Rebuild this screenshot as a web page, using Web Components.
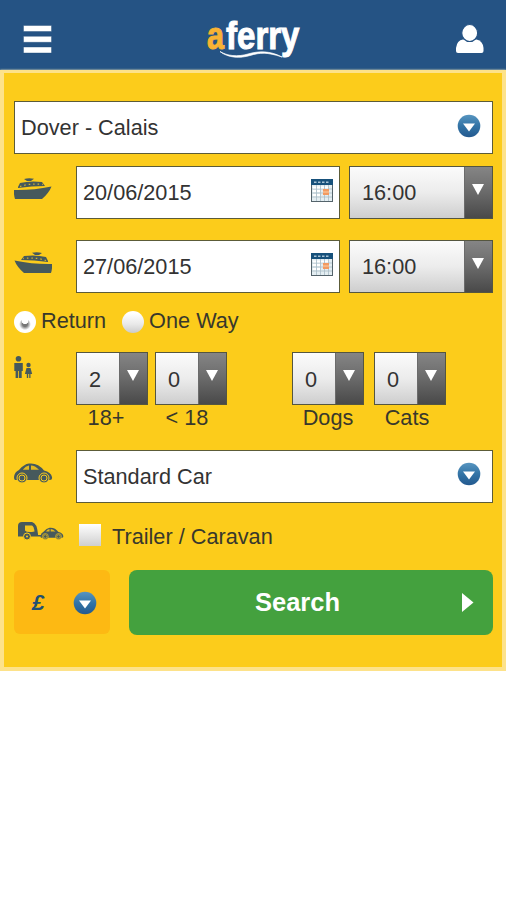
<!DOCTYPE html>
<html lang="en"><head><meta charset="utf-8"><title>aferry</title>
<style>
body{margin:0;background:#fff;font-family:"Liberation Sans",Arial,sans-serif;font-size:21.700px;line-height:26px;color:#38382c}
</style></head><body>
<af-app></af-app>
<script>
const define=(name,html)=>{
  const t=document.createElement('template');
  t.innerHTML='<style>*{box-sizing:border-box}svg{display:block;flex:none}</style>'+html;
  customElements.define(name,class extends HTMLElement{
    constructor(){super();this.attachShadow({mode:'open'}).append(t.content.cloneNode(true));}
  });
};
define('af-header',`<style>
:host{display:flex;justify-content:space-between;align-items:flex-start;height:70px;box-sizing:border-box;padding:0 22px 0 23px;background:#255384}
</style>
<svg width="29" height="70"><path d="M.5 25.500H28.500v6H.5zM.5 36.300h28v6H.5zM.5 47h28v6H.5z" fill="#fff" stroke="#1b4674" stroke-width=".4"/></svg>
<svg width="110" height="70" style="margin-left:4px" font-family="Liberation Sans" font-weight="bold" stroke-width="1"><text x="6" y="49" font-size="38" textLength="17" lengthAdjust="spacingAndGlyphs" fill="#f8b334" stroke="#f8b334">a</text><text x="25" y="49" font-size="38" textLength="73.500" lengthAdjust="spacingAndGlyphs" fill="#fff" stroke="#fff">ferry</text>
<path d="M19 51.500C27 58 39 58.500 49 55.500S66 52 81 57C69 50.500 57 51 47 54S26 56 19 51.500Z" fill="#fff" stroke="#fff" stroke-width=".7"/></svg>
<svg width="28" height="70"><path d="M0 51V48Q1 40 7 39.500H20.500Q27 41 27.500 48V51Q27.500 53 25.500 53H2Q0 53 0 51Z" fill="#fff"/><ellipse cx="13.700" cy="33" rx="8" ry="8.500" fill="#fff" stroke="#255384" stroke-width="1.200"/></svg>`);
define('af-panel',`<style>:host{display:block;box-sizing:border-box;height:601px;padding:28px 9.500px 0 10px;background:#fccc1b;border:4px solid #fde28a;border-top-width:3px;box-shadow:0 0 2px #fff3c0}</style><slot></slot>`);
define('af-row',`<style>:host{display:flex;align-items:center}
.i{width:62px;flex:none}.c{flex:1;display:flex;gap:9px;min-width:0}</style><div class="i"><slot name="icon"></slot></div><div class="c"><slot></slot></div>`);
define('af-field',`<style>:host{display:flex;flex:1;box-sizing:border-box;height:53px;align-items:center;justify-content:space-between;background:#fff;border:1.500px solid #5c5c38;padding:0 11px 0 6px;color:#333}</style><span><slot></slot></span><slot name="end"></slot>`);
define('af-dot',`<style>:host{display:block;margin-top:var(--dy,-4px)}</style><svg width="24" height="24"><defs><linearGradient id="g" x2="0" y2="1"><stop stop-color="#5795c0"/><stop offset=".5" stop-color="#3374a6"/><stop offset="1" stop-color="#23598f"/></linearGradient></defs><circle cx="12" cy="12" r="11.300" fill="url(#g)"/><path d="M6 9.500h12l-6 8z" fill="#fff"/></svg>`);
define('af-calendar',`<style>:host{display:block;margin:-4px -5px 0 0}</style><svg width="22" height="23"><rect x=".5" y=".5" width="21" height="22" fill="#e4eef2" stroke="#54636b"/><path d="M5.500 6V22M9.500 6V22M13.500 6V22M17.500 6V22M1 10h20M1 14h20M1 18h20" stroke="#a9bdc7" stroke-width=".8"/><path d="M2 7.500h3v2H2zM6 7.500h3v2H6zM10 7.500h3v2h-3zM14 7.500h3v2h-3zM6 11h3v2H6zM2 11h3v2H2zM2 15h3v2H2zM6 15h3v2H6z" fill="#fff"/><path d="M0 0h22v6H0z" fill="#17517b"/><path d="M3 3.200h16" stroke="#a8c3d6" stroke-width="1.500" stroke-dasharray="2.500 1.500"/><rect x="12" y="10" width="6" height="6" fill="#f29a61"/><path d="M12 13h6" stroke="#f9cfa9"/></svg>`);
define('af-select',`<style>:host{display:flex;box-sizing:border-box;width:var(--w,72px);height:53px;border:1.500px solid #55563f;background:linear-gradient(#fbfbfb,#ececec 50%,#cecece);color:#333;flex:none}
.v{flex:1;padding:var(--p,14px 0 0 12px)}.a{width:28px;border-left:1px solid #6b6b6b;background:linear-gradient(#858585,#6a6a6a 50%,#494949);display:flex;justify-content:center;padding:17px 2px 0 0}</style><div class="v"><slot></slot></div><div class="a"><svg width="14" height="12"><path d="M1 0h12L7 11z" fill="#fff"/></svg></div>`);
define('af-count',`<style>:host{display:block;width:72px;flex:none}.l{text-align:center;line-height:26px;white-space:nowrap;padding-right:var(--pr,10px)}</style><slot></slot><div class="l"><slot name="label"></slot></div>`);
define('af-radio',`<style>:host{display:flex;align-items:center;gap:5px}
i{width:22px;height:22px;border-radius:50%;background:linear-gradient(#fff 10%,#e9e9e9 60%,#cbcbcb);flex:none;margin-top:2px}
:host([checked]) i{background:radial-gradient(circle at 50% 45%,#fff 18%,transparent 20%),radial-gradient(circle at 50% 60%,#777 0 14%,#bbb 24%,#fff 34%)}</style><i></i><slot></slot>`);
define('af-check',`<style>:host{display:flex;align-items:center;gap:11px}i{width:22px;height:22px;background:linear-gradient(#fff,#cfcfcf);margin:-4px 0 0 3px}</style><i></i><slot></slot>`);
define('af-currency',`<style>:host{display:flex;justify-content:space-between;align-items:center;box-sizing:border-box;width:96px;height:64px;border-radius:6px;background:#fdb913;padding:2px 13px 0 18px;color:#204f72;font-weight:bold;font-style:italic;--dy:0}</style><slot></slot><af-dot></af-dot>`);
define('af-button',`<style>:host{display:flex;flex:1;align-items:center;box-sizing:border-box;height:65px;border-radius:8px;background:#44a13e;color:#fff;font-weight:bold;font-size:25.500px;padding-right:19px}
b{flex:1;text-align:center;padding:0 0 2px 5px}</style><b><slot></slot></b><svg width="12" height="19"><path d="M0 0L11.500 9.500L0 19z" fill="#fff"/></svg>`);
define('af-ship',`<style>:host{display:block}:host([flip]){transform:scaleX(-1);width:38px}</style><svg width="38" height="23"><g fill="#46595c"><path d="M0 12Q18 12.500 37.500 8.500Q35 15 28 21H1Q-.5 16 0 12Z"/><path d="M4 9L6 5Q16 2.500 28 4L31 8Q18 8 4 10Z"/><path d="M10 1Q15-.5 20 .8L17 3H13Z"/></g><path d="M6 8.500Q16 5 29 6.500" stroke="#d4b42b" stroke-width="1.300" stroke-dasharray="1.500 3" fill="none"/></svg>`);
define('af-people',`<style>:host{display:block}</style><svg width="19" height="23" fill="#46595c"><circle cx="4.500" cy="2.800" r="2.800"/><path d="M.3 7h8.500v8H7.700v7H5v-7H4.200v7H1.600v-7H.3z"/><circle cx="14.500" cy="9" r="2.200"/><path d="M12.500 12h4l1.700 6h-1.700v4h-1.300v-4h-1v4h-1.400v-4h-1.900z"/></svg>`);
const car=`<path d="M0 14Q.5 9 5 7Q10 1 15 .5Q24-.5 30 7.500Q37 9 38 14Q38.500 17 36 17H1Q0 17 0 14Z" fill="#46595c"/><path d="M9 6.500Q11.500 3 15 2.500V6.800H9ZM17 2.500Q21 2.500 25 6.800H17Z" fill="#e0b823"/><g fill="#46595c" stroke="#fccc1b" stroke-width="1"><circle cx="8" cy="15" r="5"/><circle cx="30" cy="15" r="5"/></g><g fill="none" stroke="#fccc1b"><circle cx="8" cy="15" r="3"/><circle cx="30" cy="15" r="3"/></g>`;
define('af-car',`<style>:host{display:block}</style><svg width="40" height="21">${car}</svg>`);
define('af-caravan',`<style>:host{display:block;margin-left:4px}</style><svg width="46" height="19"><path d="M0 16V4Q0 0 4 0H14Q19 1 20 12V13h3v1.500H0Z" fill="#46595c"/><path d="M7 3.500h7q2 1 2.500 6Q9 11 7 8.500Z" fill="#f2c51e"/><circle cx="9" cy="14.500" r="3.500" fill="#46595c" stroke="#fccc1b"/><circle cx="9" cy="14.500" r="1" fill="#fccc1b"/><g transform="translate(22.500 5.500) scale(.6)">${car}</g></svg>`);
define('af-app',`<style>
:host{display:block}.opts{display:flex;gap:16px;height:26px;margin-top:15px}
.date{width:264px;display:flex;flex:none}
.counts{display:grid;grid-template-columns:72px 72px 72px 72px;column-gap:7px;}
.counts>:nth-child(3){margin-left:58px}.counts>:nth-child(4){margin-left:61px}
.buttons{display:flex;gap:18.500px;margin-top:20px}
</style><af-header></af-header><af-panel>
<af-field>Dover - Calais<af-dot slot="end"></af-dot></af-field>
<af-row style="margin-top:12px"><af-ship slot="icon" style="margin-top:-7px"></af-ship><div class="date"><af-field>20/06/2015<af-calendar slot="end"></af-calendar></af-field></div><af-select style="--w:144px;--p:13px 0 0 12px">16:00</af-select></af-row>
<af-row style="margin-top:21px"><af-ship flip slot="icon" style="margin-top:-7px"></af-ship><div class="date"><af-field>27/06/2015<af-calendar slot="end"></af-calendar></af-field></div><af-select style="--w:144px;--p:13px 0 0 12px">16:00</af-select></af-row>
<div class="opts"><af-radio checked>Return</af-radio><af-radio>One Way</af-radio></div>
<af-row style="margin-top:18px"><af-people slot="icon" style="margin-top:-44px;padding-top:8px"></af-people><div class="counts">
<af-count style="--pr:12px"><af-select>2</af-select><span slot="label">18+</span></af-count><af-count style="--pr:8px"><af-select>0</af-select><span slot="label">&lt; 18</span></af-count><af-count style="--pr:0px"><af-select>0</af-select><span slot="label">Dogs</span></af-count><af-count style="--pr:6px"><af-select>0</af-select><span slot="label">Cats</span></af-count></div></af-row>
<af-row style="margin-top:19px"><af-car slot="icon" style="margin-top:-7px"></af-car><af-field>Standard Car<af-dot slot="end" style="--dy:-5px"></af-dot></af-field></af-row>
<af-row style="margin-top:21px"><af-caravan slot="icon" style="margin-top:-12px"></af-caravan><af-check>Trailer / Caravan</af-check></af-row>
<div class="buttons"><af-currency>£</af-currency><af-button>Search</af-button></div>
</af-panel>`);
</script></body></html>
